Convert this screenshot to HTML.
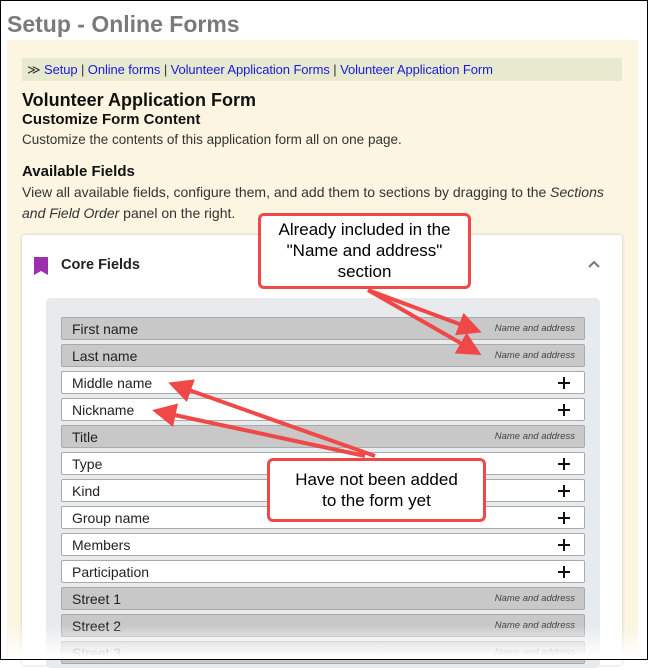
<!DOCTYPE html>
<html><head><style>
*{margin:0;padding:0;box-sizing:border-box}
body{width:648px;height:660px;overflow:hidden;background:#fff;font-family:"Liberation Sans",sans-serif;position:relative}
.frame{position:absolute;left:0;top:0;width:648px;height:660px;border:1px solid #000;z-index:10;pointer-events:none}
.t{position:absolute;left:7px;top:11px;font-size:23px;font-weight:bold;color:#7a7a7a}
.cream{position:absolute;left:7px;top:40px;width:631px;height:620px;background:#fcf5e2}
.bc{position:absolute;left:22px;top:58px;width:600px;height:23px;background:#e8ead0;font-size:13px;color:#1a1adb;padding:4px 0 0 5px;letter-spacing:-0.1px}
.bc span{color:#333}
.h{position:absolute;left:22px;color:#111}
.card{position:absolute;left:22px;top:235px;width:600px;height:430px;background:#fff;box-shadow:0 0 3px rgba(0,0,0,.2);border-radius:3px}
.inner{position:absolute;left:46px;top:298px;width:554px;height:370px;background:#e7ebee;border-radius:5px}
.row{position:absolute;left:61px;width:524px;height:23px;border:1px solid #aaa;border-radius:2px;background:#fff;font-size:14px;color:#222;padding:3px 0 0 10px}
.row.g{background:#c8c8c8}
.row i{position:absolute;right:9px;top:5px;font-size:9.5px;color:#444}
.row b{position:absolute;right:14px;top:5px;width:12px;height:12px}
.row b:before{content:"";position:absolute;left:0;top:5px;width:12px;height:2px;background:#111}
.row b:after{content:"";position:absolute;left:5px;top:0;width:2px;height:12px;background:#111}
.fade{position:absolute;left:8px;top:625px;width:630px;height:35px;background:linear-gradient(rgba(255,255,255,0),#fff 90%)}
.call{position:absolute;background:#fff;border:3px solid #f04848;border-radius:6px;font-size:17px;text-align:center;color:#000;line-height:21px}
</style></head><body>
<div class="frame"></div>
<div class="t">Setup - Online Forms</div>
<div class="cream"></div>
<div class="bc"><span>≫</span> Setup <span>|</span> Online forms <span>|</span> Volunteer Application Forms <span>|</span> Volunteer Application Form</div>
<div class="h" style="top:90px;font-size:18px;font-weight:bold">Volunteer Application Form</div>
<div class="h" style="top:111px;font-size:15px;font-weight:bold">Customize Form Content</div>
<div class="h" style="top:132px;font-size:13.5px;color:#333">Customize the contents of this application form all on one page.</div>
<div class="h" style="top:163px;font-size:15px;font-weight:bold">Available Fields</div>
<div class="h" style="top:182px;font-size:14px;color:#333;line-height:21px;width:600px">View all available fields, configure them, and add them to sections by dragging to the <em>Sections</em> <em>and Field Order</em> panel on the right.</div>
<div class="card"></div>
<svg style="position:absolute;left:33px;top:256px" width="16" height="20"><path d="M1 1h14v18l-7-4-7 4z" fill="#9b2fae"/></svg>
<div class="h" style="left:61px;top:257px;font-size:14.5px;font-weight:bold;color:#222">Core Fields</div>
<svg style="position:absolute;left:587px;top:259px" width="14" height="10"><path d="M2 8l5-5 5 5" stroke="#777" stroke-width="2" fill="none"/></svg>
<div class="inner"></div>
<div class="row g" style="top:317px">First name<i>Name and address</i></div>
<div class="row g" style="top:344px">Last name<i>Name and address</i></div>
<div class="row" style="top:371px">Middle name<b></b></div>
<div class="row" style="top:398px">Nickname<b></b></div>
<div class="row g" style="top:425px">Title<i>Name and address</i></div>
<div class="row" style="top:452px">Type<b></b></div>
<div class="row" style="top:479px">Kind<b></b></div>
<div class="row" style="top:506px">Group name<b></b></div>
<div class="row" style="top:533px">Members<b></b></div>
<div class="row" style="top:560px">Participation<b></b></div>
<div class="row g" style="top:587px">Street 1<i>Name and address</i></div>
<div class="row g" style="top:614px">Street 2<i>Name and address</i></div>
<div class="row g" style="top:641px">Street 3<i>Name and address</i></div>
<div class="fade"></div>
<svg style="position:absolute;left:0;top:0" width="648" height="660">
<defs><marker id="a" markerWidth="6" markerHeight="6" refX="5" refY="3" orient="auto"><path d="M0 0L6 3L0 6z" fill="#f04848"/></marker></defs>
<g stroke="#f04848" stroke-width="4" fill="none" marker-end="url(#a)">
<line x1="368" y1="290" x2="478" y2="331"/>
<line x1="368" y1="290" x2="478" y2="353"/>
<line x1="375" y1="456" x2="172" y2="384"/>
<line x1="365" y1="456" x2="156" y2="411"/>
</g></svg>
<div class="call" style="left:258px;top:213px;width:213px;height:76px;padding-top:3px">Already included in the<br>"Name and address"<br>section</div>
<div class="call" style="left:267px;top:458px;width:219px;height:64px;padding-top:8px">Have not been added<br>to the form yet</div>
</body></html>
